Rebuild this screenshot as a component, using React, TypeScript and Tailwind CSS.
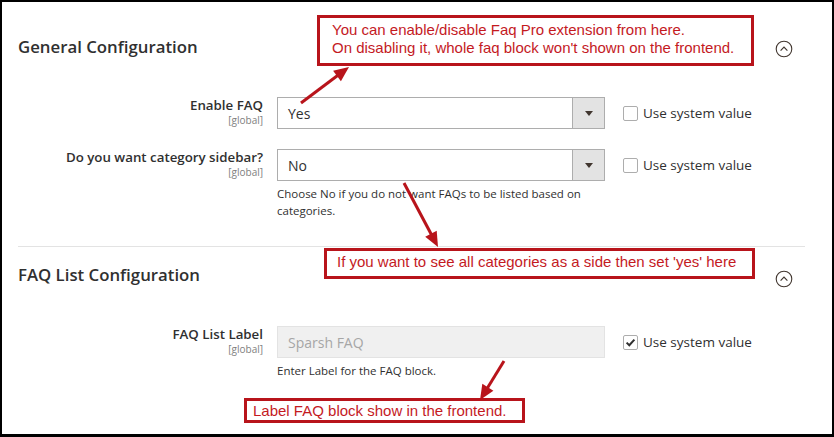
import React from "react";

type Pt = [number, number];

function Arrow({ from, to }: { from: Pt; to: Pt }) {
  const dx = to[0] - from[0];
  const dy = to[1] - from[1];
  const len = Math.sqrt(dx * dx + dy * dy);
  const ux = dx / len;
  const uy = dy / len;
  const L = 15;
  const W = 13;
  const bx = to[0] - ux * L;
  const by = to[1] - uy * L;
  const nx = -uy;
  const ny = ux;
  const p1 = `${bx + (nx * W) / 2},${by + (ny * W) / 2}`;
  const p2 = `${bx - (nx * W) / 2},${by - (ny * W) / 2}`;
  return (
    <g>
      <line x1={from[0]} y1={from[1]} x2={bx + ux * 2} y2={by + uy * 2} stroke="#b8141b" strokeWidth={3} />
      <polygon points={`${to[0]},${to[1]} ${p1} ${p2}`} fill="#b8141b" />
    </g>
  );
}

function Collapse({ className = "" }: { className?: string }) {
  return (
    <svg width="18" height="18" viewBox="0 0 18 18" className={className}>
      <circle cx="9" cy="9" r="7.8" fill="none" stroke="#41362f" strokeWidth="1.1" />
      <path d="M5.6 10.6 L9 7.2 L12.4 10.6" fill="none" stroke="#41362f" strokeWidth="1.2" />
    </svg>
  );
}

function Checkbox({ checked = false }: { checked?: boolean }) {
  return (
    <div className="w-[15px] h-[15px] border border-[#adadad] rounded-[2px] bg-white flex items-center justify-center shrink-0">
      {checked && (
        <svg width="11" height="11" viewBox="0 0 11 11">
          <path d="M1.6 5.6 L4.3 8.2 L9.4 2.6" fill="none" stroke="#303030" strokeWidth="2" />
        </svg>
      )}
    </div>
  );
}

function Label({ text }: { text: string }) {
  return (
    <div className="w-[245px] shrink-0 text-right">
      <div className="text-[13.3px] leading-[17px] font-semibold text-[#303030]">{text}</div>
      <div className="text-[10px] leading-[12px] text-[#808080]">[global]</div>
    </div>
  );
}

function SystemValue({ checked = false }: { checked?: boolean }) {
  return (
    <div className="ml-[18px] h-[32px] flex items-center gap-[5px]">
      <Checkbox checked={checked} />
      <span className="text-[13.5px] text-[#303030]">Use system value</span>
    </div>
  );
}

function Select({ value }: { value: string }) {
  return (
    <div className="h-[32px] w-[328px] border border-[#adadad] bg-white flex">
      <div className="flex-1 flex items-center pl-[10px] text-[14px] text-[#303030]">{value}</div>
      <div className="w-[32px] h-full bg-[#e3e3e3] border-l border-[#adadad] flex items-center justify-center">
        <svg width="8" height="5" viewBox="0 0 8 5">
          <path d="M0 0 L8 0 L4 5 Z" fill="#41362f" />
        </svg>
      </div>
    </div>
  );
}

export default function App() {
  return (
    <div className="relative w-[834px] h-[437px] bg-white overflow-hidden" style={{ fontFamily: "'Open Sans', sans-serif" }}>
      <div className="h-full border-black border-t-2 border-l-2 border-r-2 border-b-[3px] pl-4 pr-[27px]">
        {/* Section 1 */}
        <div className="h-[245px] border-b border-[#e3e3e3]">
          <div className="h-[90px] flex items-center justify-between">
            <h2 className="text-[16.8px] font-semibold text-[#303030]">General Configuration</h2>
            <Collapse className="mr-[12px] mt-[4px]" />
          </div>
          <div className="pt-[5px] flex flex-col gap-[20px]">
            <div className="flex">
              <Label text="Enable FAQ" />
              <div className="ml-[14px]">
                <Select value="Yes" />
              </div>
              <SystemValue />
            </div>
            <div className="flex">
              <Label text="Do you want category sidebar?" />
              <div className="ml-[14px] w-[328px]">
                <Select value="No" />
                <p className="mt-[4px] text-[11.5px] leading-[17px] text-[#303030]">
                  Choose No if you do not want FAQs to be listed based on categories.
                </p>
              </div>
              <SystemValue />
            </div>
          </div>
        </div>
        {/* Section 2 */}
        <div>
          <div className="h-[56px] flex items-center justify-between">
            <h2 className="text-[16.8px] font-semibold text-[#303030]">FAQ List Configuration</h2>
            <Collapse className="mr-[12px] mt-[8px]" />
          </div>
          <div className="pt-[23px]">
            <div className="flex">
              <Label text="FAQ List Label" />
              <div className="ml-[14px] w-[328px]">
                <div className="h-[32px] border border-[#e3e3e3] bg-[#f0f0f0] flex items-center pl-[10px] text-[14px] text-[#a6a6a6]">
                  Sparsh FAQ
                </div>
                <p className="mt-[4px] text-[11.5px] leading-[17px] text-[#303030]">Enter Label for the FAQ block.</p>
              </div>
              <SystemValue checked />
            </div>
          </div>
        </div>
      </div>

      {/* Annotations */}
      <div
        className="absolute left-[317px] top-[15px] w-[437px] h-[51px] border-[3px] border-[#b8141b] bg-white pl-[12px] pt-[3px] text-[15px] leading-[18px] text-[#c41a1f]"
        style={{ fontFamily: "'Liberation Sans', Arial, sans-serif" }}
      >
        <div>You can enable/disable Faq Pro extension from here.</div>
        <div>On disabling it, whole faq block won't shown on the frontend.</div>
      </div>
      <div
        className="absolute left-[324px] top-[248px] w-[431px] h-[31px] border-[3px] border-[#b8141b] bg-white pl-[10px] pt-[2px] text-[15px] leading-[18px] text-[#c41a1f]"
        style={{ fontFamily: "'Liberation Sans', Arial, sans-serif" }}
      >
        If you want to see all categories as a side then set 'yes' here
      </div>
      <div
        className="absolute left-[244px] top-[398px] w-[281px] h-[25px] border-[3px] border-[#b8141b] bg-white pl-[6px] text-[15px] leading-[19px] text-[#c41a1f]"
        style={{ fontFamily: "'Liberation Sans', Arial, sans-serif" }}
      >
        Label FAQ block show in the frontend.
      </div>

      <svg className="absolute inset-0 pointer-events-none" width="834" height="437">
        <Arrow from={[301, 103]} to={[349, 67]} />
        <Arrow from={[404, 183]} to={[438, 247]} />
        <Arrow from={[504, 361]} to={[480, 400]} />
      </svg>
    </div>
  );
}
